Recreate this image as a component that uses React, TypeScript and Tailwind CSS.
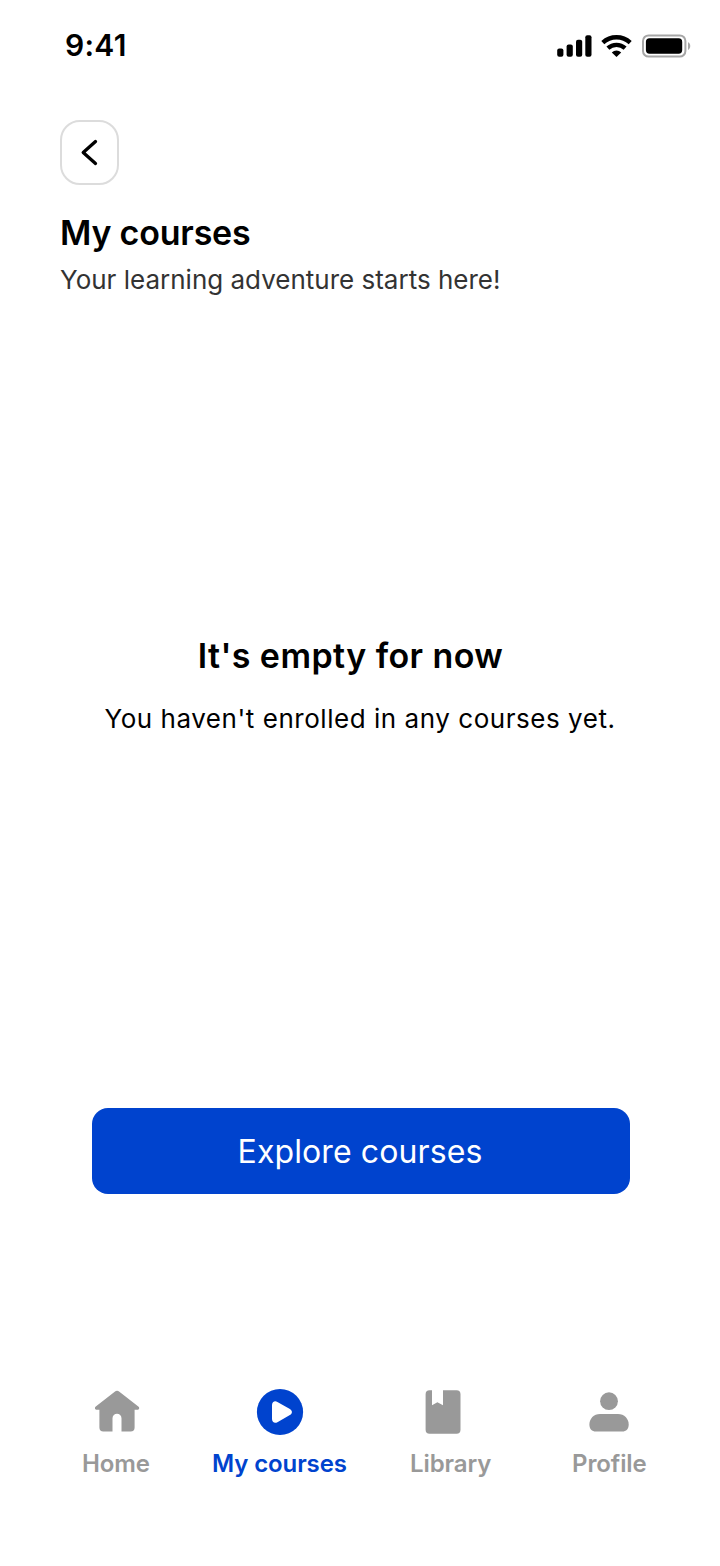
import type { ReactNode } from "react";

function StatusBar() {
  return (
    <header className="flex h-[92px] items-start justify-between pl-[65px] pr-[28px]">
      <span className="mt-[29px] text-[30px] font-semibold leading-8 tracking-[0.3px]">9:41</span>
      <div className="mt-[34px] flex items-center">
        <svg width="36" height="24" viewBox="0 0 36 24" aria-label="Signal">
          <rect x="1.2" y="14.5" width="6.2" height="8.2" rx="2" />
          <rect x="10.6" y="10.6" width="6.2" height="12.1" rx="2" />
          <rect x="20" y="5.8" width="6.2" height="16.9" rx="2" />
          <rect x="29.3" y="1.2" width="6.2" height="21.5" rx="2" />
        </svg>
        <svg className="ml-[8px]" width="32" height="24" viewBox="0 0 32 24" aria-label="Wi-Fi">
          <g fill="none" stroke="#000" strokeWidth="4.4">
            <path d="M2.8 8.6a20.2 20.2 0 0 1 27.4 0" />
            <path d="M7.9 14.2a12.9 12.9 0 0 1 17.2 0" />
          </g>
          <path d="M16.5 22.9l-4.7-4.5a7 7 0 0 1 9.4 0z" />
        </svg>
        <svg className="ml-[10px]" width="50" height="24" viewBox="0 0 50 24" aria-label="Battery">
          <rect x="1" y="1.4" width="42.4" height="21.2" rx="5.6" fill="none" stroke="#a6a6a6" strokeWidth="2" />
          <rect x="3.9" y="4.3" width="36.3" height="15.4" rx="3.6" />
          <path d="M46 8.3c3 1.2 3 6.4 0 7.6z" fill="#a6a6a6" />
        </svg>
      </div>
    </header>
  );
}

function HomeIcon() {
  return (
    <svg width="48" height="48" viewBox="0 0 48 48" fill="#999">
      <path d="M21.7 3.7a3.8 3.8 0 0 1 4.7 0L45.3 18.4c1.7 1.4.8 3.4-1.1 3.4h-2.6v17.7a4 4 0 0 1-4 4h-9.1V30.3a4.5 4.5 0 0 0-9 0V43.5h-9.1a4 4 0 0 1-4-4V21.8H4.1c-2 0-3-2-1.3-3.4z" />
    </svg>
  );
}

function PlayIcon() {
  return (
    <svg width="48" height="48" viewBox="0 0 48 48">
      <circle cx="24" cy="24" r="23.1" fill="#0043ce" />
      <path d="M16 17c0-3.3 2.9-4.6 5.4-3.1L33.9 20.9c2.7 1.5 2.7 4.7 0 6.2L21.4 34.2c-2.5 1.5-5.4.2-5.4-3.1z" fill="#fff" />
    </svg>
  );
}

function LibraryIcon() {
  return (
    <svg width="48" height="48" viewBox="0 0 48 48" fill="#999">
      <path d="M10.6 2.2H13v15.1l5.4-3 5.6 3V2.2h13.5a4 4 0 0 1 4 4v35.5a4 4 0 0 1-4 4H10.6a4 4 0 0 1-4-4V6.2a4 4 0 0 1 4-4z" />
    </svg>
  );
}

function ProfileIcon() {
  return (
    <svg width="48" height="48" viewBox="0 0 48 48" fill="#999">
      <circle cx="24" cy="13.2" r="8.9" />
      <path d="M15 26h18c6.3 0 10.7 4.8 10.7 10.4 0 4.3-2.5 7.1-6.5 7.1H10.9c-4 0-6.5-2.8-6.5-7.1C4.4 30.8 8.7 26 15 26z" />
    </svg>
  );
}

function NavItem({ className, iconClass, icon, label }: { className: string; iconClass: string; icon: ReactNode; label: string }) {
  return (
    <a href="#" className={`flex shrink-0 flex-col items-start ${className}`}>
      <span className={iconClass}>{icon}</span>
      <span className="mt-[13px] whitespace-nowrap text-[24px] font-semibold leading-[30px] tracking-[-0.1px]">{label}</span>
    </a>
  );
}

export default function App() {
  return (
    <div className="flex h-[1566px] w-[720px] flex-col overflow-hidden bg-white font-['Inter',sans-serif] text-black">
      <StatusBar />
      <section className="flex flex-col items-start pl-[60px] pt-[28px]">
        <button aria-label="Back" className="flex h-[65px] w-[59px] items-center justify-center rounded-[20px] border-2 border-[#dcdcdc]">
          <svg className="mr-px" width="20" height="28" viewBox="0 0 20 28" fill="none" stroke="#000" strokeWidth="3.3" strokeLinecap="round" strokeLinejoin="round">
            <path d="M16.5 2.6 4.2 13.5l12.3 10.9" />
          </svg>
        </button>
        <h1 className="mt-[27px] text-[34px] font-semibold leading-[42px] tracking-[-0.2px]">My courses</h1>
        <p className="mt-[9px] text-[26px] leading-[34px] text-[#333]">Your learning adventure starts here!</p>
      </section>
      <main className="flex flex-col px-[92px] pt-[338px]">
        <h2 className="-ml-[19px] text-center text-[34px] font-semibold leading-[42px] tracking-[0.42px]">It's empty for now</h2>
        <p className="mt-[25px] whitespace-nowrap text-center text-[26px] leading-[34px] tracking-[0.54px]">You haven't enrolled in any courses yet.</p>
        <button className="mt-[372px] h-[86px] w-[538px] rounded-[16px] bg-[#0043ce] pr-0.5 pt-0.5 text-[32px] tracking-[0.1px] text-white">Explore courses</button>
      </main>
      <nav className="mt-[194px] flex pl-[82px] text-[#999]">
        <NavItem className="w-[130px]" iconClass="ml-[11px]" icon={<HomeIcon />} label="Home" />
        <NavItem className="w-[198px] text-[#0043ce]" iconClass="ml-[44px]" icon={<PlayIcon />} label="My courses" />
        <NavItem className="w-[162px]" iconClass="ml-[9px]" icon={<LibraryIcon />} label="Library" />
        <NavItem className="w-[80px]" iconClass="ml-[13px]" icon={<ProfileIcon />} label="Profile" />
      </nav>
    </div>
  );
}
